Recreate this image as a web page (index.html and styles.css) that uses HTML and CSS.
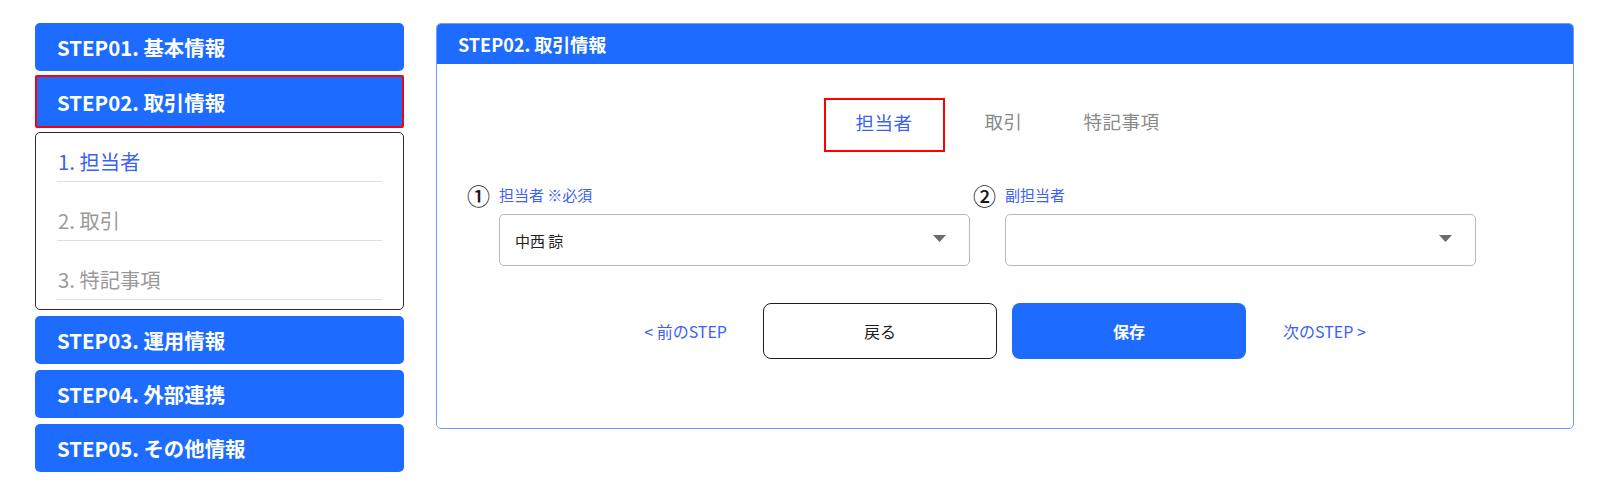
FILE: index.html
```html
<!DOCTYPE html>
<html lang="ja">
<head>
<meta charset="utf-8">
<title>STEP02. 取引情報</title>
<link rel="stylesheet" href="styles.css">
</head>
<body>
<div class="page">
  <nav class="sidebar">
    <div class="step">STEP01. 基本情報</div>
    <div class="step step-current">STEP02. 取引情報</div>
    <div class="submenu">
      <div class="sub-item sub-active">1. 担当者</div>
      <div class="sub-item">2. 取引</div>
      <div class="sub-item">3. 特記事項</div>
    </div>
    <div class="step">STEP03. 運用情報</div>
    <div class="step">STEP04. 外部連携</div>
    <div class="step">STEP05. その他情報</div>
  </nav>

  <section class="panel">
    <header class="panel-head">STEP02. 取引情報</header>
    <div class="panel-body">
      <div class="tabs">
        <div class="tab tab-active">担当者</div>
        <div class="tab">取引</div>
        <div class="tab">特記事項</div>
      </div>

      <div class="fields">
        <div class="field">
          <span class="num">①</span>
          <label class="label">担当者 ※必須</label>
          <div class="select">
            <span class="select-value">中西 諒</span>
            <svg class="caret" width="13" height="7" viewBox="0 0 13 7"><polygon points="0,0 13,0 6.5,7" fill="#6b6b6b"/></svg>
          </div>
        </div>
        <div class="field">
          <span class="num">②</span>
          <label class="label">副担当者</label>
          <div class="select">
            <span class="select-value"></span>
            <svg class="caret" width="13" height="7" viewBox="0 0 13 7"><polygon points="0,0 13,0 6.5,7" fill="#6b6b6b"/></svg>
          </div>
        </div>
      </div>

      <div class="actions">
        <a class="link link-prev">&lt; 前のSTEP</a>
        <button class="btn btn-back">戻る</button>
        <button class="btn btn-save">保存</button>
        <a class="link link-next">次のSTEP &gt;</a>
      </div>
    </div>
  </section>
</div>
</body>
</html>
```

FILE: styles.css
```css
* { box-sizing: border-box; }

html, body {
  margin: 0;
  padding: 0;
  background: #ffffff;
}

body {
  font-family: "Noto Sans CJK JP", "Noto Sans", sans-serif;
  color: #222;
}

.page {
  display: flex;
  align-items: flex-start;
  gap: 32px;
  padding: 23px 0 0 35px;
}

/* Sidebar */
.sidebar {
  width: 369px;
  display: flex;
  flex-direction: column;
  gap: 6px;
}

.step {
  height: 48px;
  display: flex;
  align-items: center;
  padding-left: 22px;
  background: #1e6cff;
  color: #fff;
  font-size: 20.4px;
  font-weight: 700;
  border-radius: 5px;
}

.step-current {
  height: 53px;
  margin: -2px 0;
  border: 2px solid #ff0000;
  border-radius: 2px;
  padding-left: 20px;
}

.submenu {
  height: 178px;
  border: 1px solid #2b2b2b;
  border-radius: 5px;
  padding: 0 21px 10px 21px;
}

.sub-item {
  padding: 26px 0 8px 1px;
  line-height: 24px;
  font-size: 20.3px;
  color: #9a9a9a;
  border-bottom: 1px solid #dedede;
}

.sub-item:first-child {
  padding-top: 16px;
}

.sub-active {
  color: #3b62f6;
}

/* Panel */
.panel {
  width: 1138px;
  height: 406px;
  border: 1px solid #6d9cff;
  border-radius: 5px;
  overflow: hidden;
  display: flex;
  flex-direction: column;
}

.panel-head {
  height: 40px;
  flex: none;
  background: #1e6cff;
  color: #fff;
  font-size: 18px;
  font-weight: 700;
  display: flex;
  align-items: center;
  padding-left: 21px;
}

.panel-body {
  padding: 34px 0 0 30px;
}

.tabs {
  display: flex;
  justify-content: center;
  margin-left: -36px;
}

.tab {
  width: 118px;
  height: 54px;
  display: flex;
  align-items: center;
  justify-content: center;
  padding-bottom: 8px;
  font-size: 18.5px;
  letter-spacing: 0.5px;
  color: #8a8a8a;
}

.tab-active {
  width: 121px;
  border: 2px solid #ff0000;
  color: #3b62f6;
  padding-bottom: 6px;
}

.fields {
  display: grid;
  grid-template-columns: 506px 505px;
  margin-top: 32px;
}

.field {
  display: grid;
  grid-template-columns: 32px 471px;
  grid-template-rows: 22px 52px;
  row-gap: 8px;
}

.num {
  grid-column: 1;
  grid-row: 1;
  font-size: 23px;
  line-height: 22px;
  color: #1a1a1a;
  font-weight: 500;
}

.label {
  grid-column: 2;
  grid-row: 1;
  font-size: 15px;
  line-height: 22px;
  color: #3b62f6;
}

.select {
  grid-column: 2;
  grid-row: 2;
  border: 1px solid #b9b9b9;
  border-radius: 5px;
  display: flex;
  align-items: center;
  justify-content: space-between;
  padding: 0 23px 4px 15px;
}

.select-value {
  font-size: 15px;
  color: #222;
  padding-top: 4px;
}

.caret {
  display: block;
}

.actions {
  display: flex;
  justify-content: center;
  align-items: center;
  margin: 37px 0 0 -30px;
}

.link {
  font-size: 16px;
  color: #3b62f6;
  cursor: pointer;
}

.link-prev { margin-right: 36px; }
.link-next { margin-left: 37px; }

.btn {
  width: 234px;
  height: 56px;
  border-radius: 8px;
  font-family: inherit;
  font-size: 16px;
}

.btn-back {
  background: #fff;
  border: 1.5px solid #1e1e1e;
  color: #222;
  margin-right: 15px;
}

.btn-save {
  background: #1e6cff;
  border: none;
  color: #fff;
  font-weight: 700;
}
```
